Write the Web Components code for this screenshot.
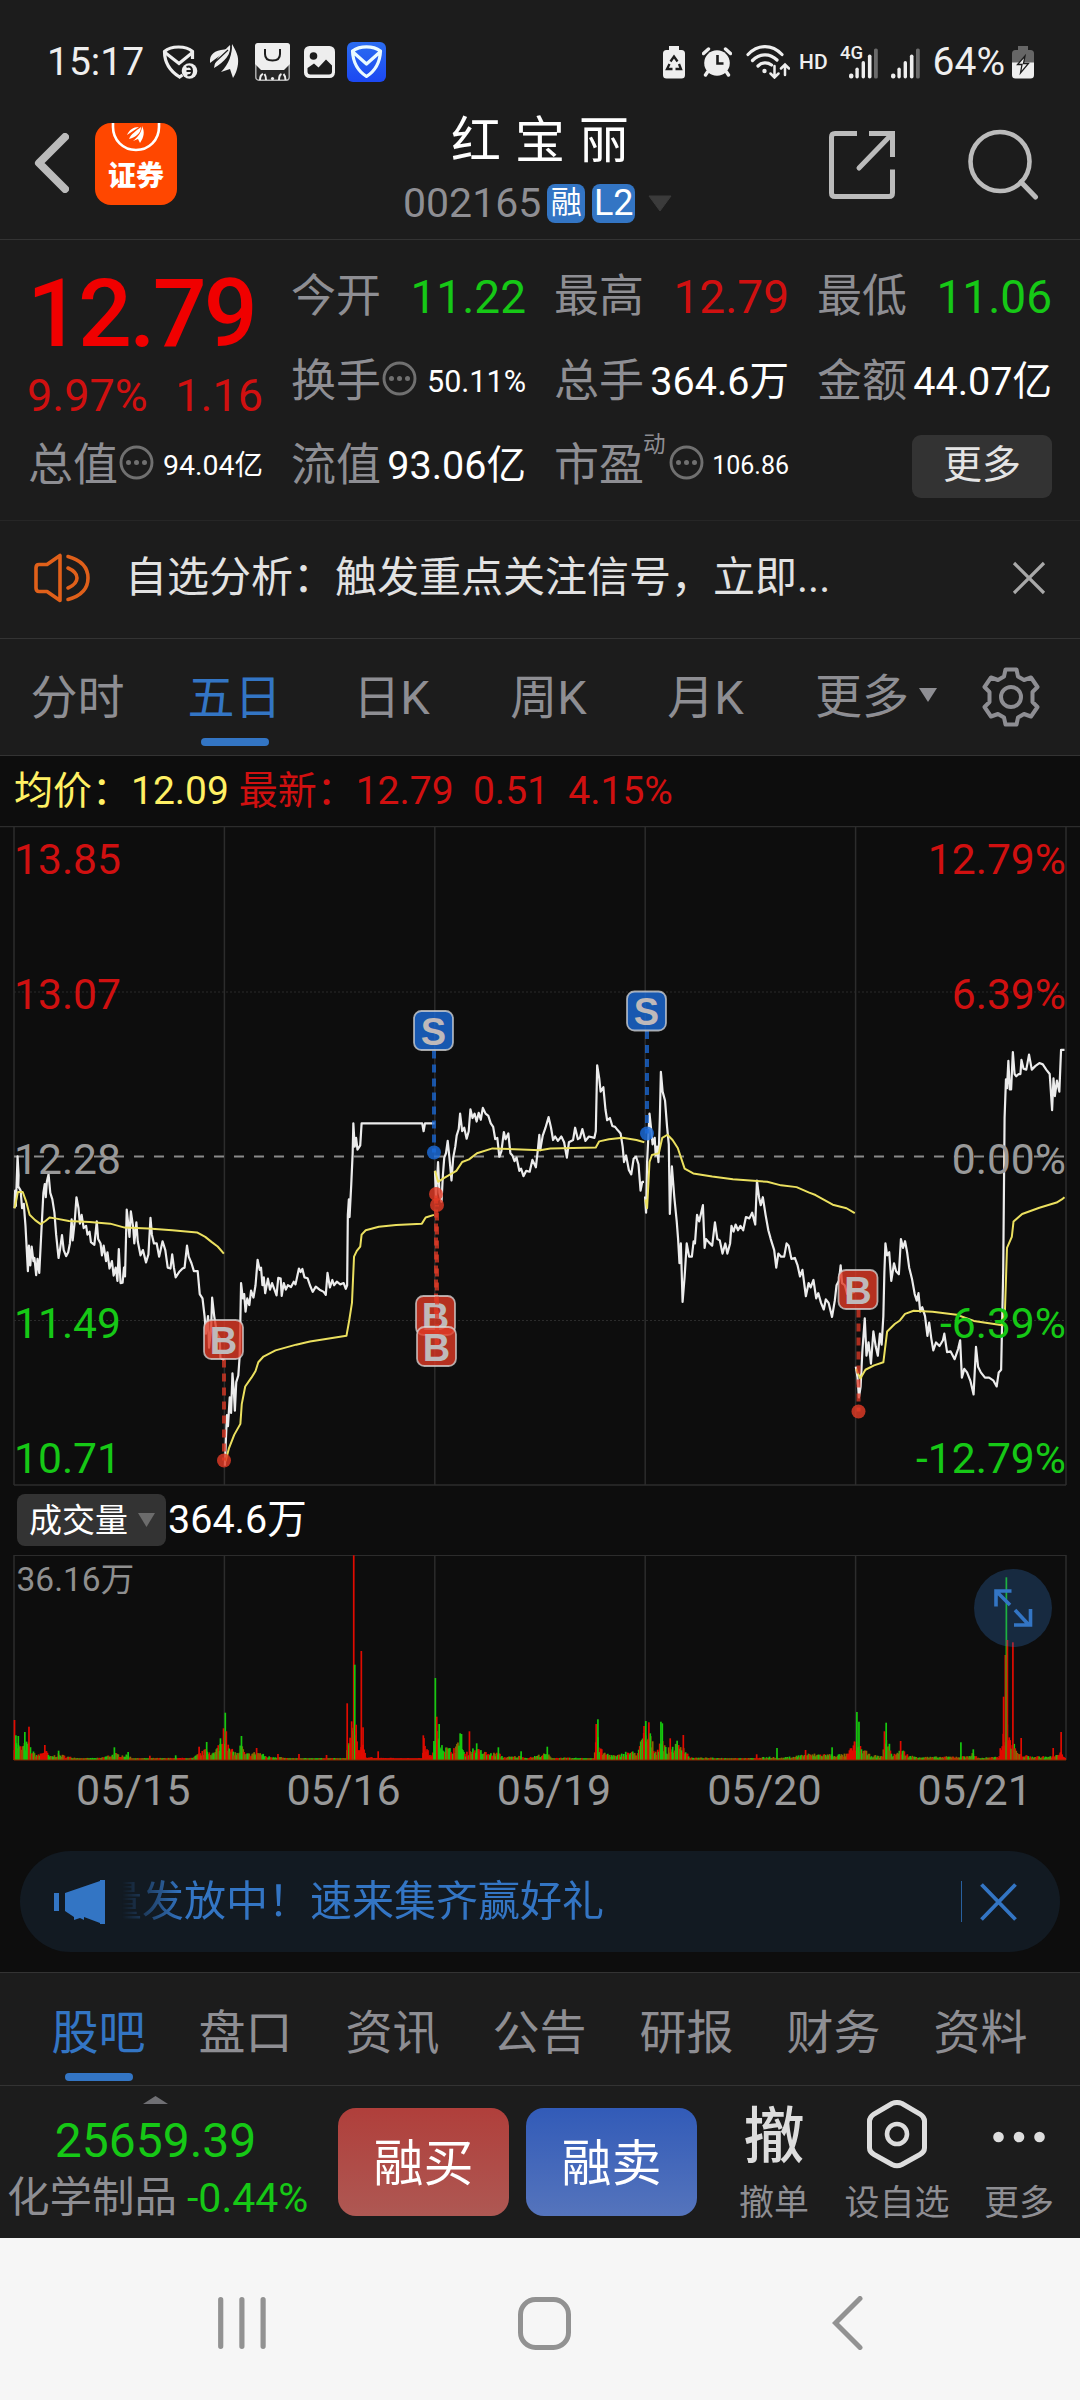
<!DOCTYPE html>
<html lang="zh-CN">
<head>
<meta charset="utf-8">
<title>红宝丽 002165</title>
<style>
  body {
    margin: 0;
    width: 1080px;
    height: 2400px;
    overflow: hidden;
    background: #0d0d0d;
    font-family: Roboto, "Noto Sans CJK SC", sans-serif;
    --panel: #1c1c1c;
    --line: #333;
    --grey: #8e8e93;
    --blue: #3375c4;
    --red: #d01010;
    --green: #16c816;
  }
</style>
</head>
<body>
<status-bar></status-bar>
<stock-header name="红 宝 丽" code="002165"></stock-header>
<quote-panel>
  <quote-cell label="今开" tone="down" size="46">11.22</quote-cell>
  <quote-cell label="最高" tone="up" size="46">12.79</quote-cell>
  <quote-cell label="最低" tone="down" size="46">11.06</quote-cell>
  <quote-cell label="换手" info size="30.5">50.11%</quote-cell>
  <quote-cell label="总手" size="39.5">364.6万</quote-cell>
  <quote-cell label="金额" size="39.5">44.07亿</quote-cell>
  <quote-cell slot="last" label="总值" info size="28.5">94.04亿</quote-cell>
  <quote-cell slot="last" label="流值" size="39.5">93.06亿</quote-cell>
  <quote-cell slot="last" label="市盈" mark="动" info size="25">106.86</quote-cell>
</quote-panel>
<signal-notice>自选分析：触发重点关注信号，立即...</signal-notice>
<period-tabs></period-tabs>
<chart-legend></chart-legend>
<price-chart></price-chart>
<volume-head></volume-head>
<volume-chart></volume-chart>
<date-axis></date-axis>
<promo-banner>量发放中！速来集齐赢好礼</promo-banner>
<info-tabs></info-tabs>
<trade-bar></trade-bar>
<system-nav></system-nav>

<script>
class Base extends HTMLElement {
  constructor() {
    super();
    this.shadow = this.attachShadow({mode: 'open'});
  }

  connectedCallback() {
    this.shadow.innerHTML = `<style>:host, * { box-sizing: border-box; } svg { display: block; flex: none; }</style>` + this.render();
  }
}

class StatusBar extends Base {
  signal() {
    return `
      <rect x="0" y="26" width="4.4" height="5" rx="2"/>
      <rect x="6.4" y="20" width="3.4" height="11" rx="1.7"/>
      <rect x="12.6" y="13.5" width="3.4" height="17.5" rx="1.7"/>
      <rect x="18.9" y="7" width="3.6" height="24" rx="1.8"/>
      <rect x="25" y="1" width="3.8" height="30" rx="1.6" fill="#6b6b6b"/>`;
  }

  render() {
    return `
      <style>
        :host {
          display: flex;
          align-items: center;
          height: 110px;
          padding: 14px 46px 0 47px;
          background: var(--panel);
          color: #eee;
          font-size: 39px;
          line-height: 50px;
        }
        .left, .right { display: flex; align-items: center; }
        .right { margin-left: auto; }
        .hd { font-size: 21px; font-weight: 500; margin: 0 12px 0 9px; }
        .net { overflow: visible; }
      </style>
      <div class="left">
        <span>15:17</span>
        <svg width="36" height="36" viewBox="0 0 36 36" style="margin-left:18px" fill="none" stroke="#eee" stroke-width="3.2">
          <path d="M20.500 31 17.500 33C8 27 2.500 18 2.500 7.500 9 1.500 24 1.500 30.500 7.500V15"/>
          <path d="M3 8.500 17 19.500 30.500 8.500" />
          <circle cx="27.500" cy="27" r="7.800" fill="#eee" stroke="none"/>
          <path d="M24.500 23c4-1.500 5.500 1 5.500 4s-1.500 5-4.500 4M24.500 27h5" stroke="#1c1c1c" stroke-width="2"/>
        </svg>
        <svg width="29" height="36" viewBox="0 0 29 36" style="margin-left:12px" fill="#eee">
          <path d="M0 19C-1 9 6 6 18 5 13 10 6 14 0 19Z"/>
          <path d="M4 24C5 14 13 8 20 1 22 10 14 18 4 24Z"/>
          <path d="M11 28C19 20 22 11 22 0 26 7 29 12 28 20 27 27 25 31 23 34L20 25Z"/>
          <path d="M3 20 18 6M10 26C18 18 21 10 21 3" stroke="#1c1c1c" stroke-width="1.200" fill="none"/>
        </svg>
        <svg width="35" height="38" viewBox="0 0 35 38" style="margin-left:16px">
          <rect x=".8" y=".8" width="33.400" height="36.400" rx="3" fill="#262626" stroke="#b5b5b5" stroke-width="1.400"/>
          <path d="M3 0H32Q35 0 35 3V21L29 27H6L0 21V3Q0 0 3 0Z" fill="#eee"/>
          <path d="M10 6V11Q10 17.500 17.500 17.500T25 11V6" fill="none" stroke="#1c1c1c" stroke-width="2"/>
          <path d="M5 37Q5 32 8 31M11 37Q11 33 9.500 31M24 37Q24 32 26.500 31M30.500 37Q30.500 33 28.500 31" fill="none" stroke="#eee" stroke-width="2"/>
          <circle cx="17.500" cy="35.500" r="1.600" fill="#eee"/>
        </svg>
        <svg width="31" height="32" viewBox="0 0 31 32" style="margin-left:14px">
          <rect width="31" height="32" rx="5.500" fill="#eee"/>
          <circle cx="9.500" cy="10" r="3.800" fill="#1c1c1c"/>
          <path d="M3.500 25.500V22L10 17.500 14.500 21.500 22 13.500 28 19.500V25.500Q28 28.500 25 28.500H6.500Q3.500 28.500 3.500 25.500Z" fill="#1c1c1c"/>
        </svg>
        <svg width="39" height="40" viewBox="0 0 39 40" style="margin-left:12px">
          <defs><linearGradient id="b" x1="0" y1="0" x2="0" y2="1"><stop offset="0" stop-color="#2a6cf0"/><stop offset="1" stop-color="#1c48f2"/></linearGradient></defs>
          <rect width="39" height="40" rx="6" fill="url(#b)"/>
          <path d="M5.500 9C13 3.500 26 3.500 33.500 9 33 21 28 29 19.500 34.500 11 29 6 21 5.500 9Z M6 10 19.500 22 33 10" fill="none" stroke="#eafaff" stroke-width="3.200" stroke-linejoin="round"/>
        </svg>
      </div>
      <div class="right">
        <svg width="22" height="33" viewBox="0 0 22 33">
          <path d="M6 0H16V4H18.500Q22 4 22 7.500V29Q22 32.500 18.500 32.500H3.500Q0 32.500 0 29V7.500Q0 4 3.500 4H6Z" fill="#eee"/>
          <path d="M7.500 15.500 11 10.500 14.500 15.500M16 18 18 23H12.500M9.500 23H4L6.500 18" fill="none" stroke="#1c1c1c" stroke-width="2.300"/>
        </svg>
        <svg width="30" height="30" viewBox="0 0 30 30" style="margin-left:17px">
          <circle cx="15" cy="16" r="12.800" fill="#eee"/>
          <path d="M1.500 6.500 6.500 2M23.500 2 28.500 6.500M5.500 25 3.500 28M24.500 25 26.500 28" stroke="#eee" stroke-width="3.400" stroke-linecap="round"/>
          <path d="M15.500 8V16.500H21.500" fill="none" stroke="#1c1c1c" stroke-width="2.600"/>
        </svg>
        <svg width="44" height="34" viewBox="0 0 44 34" style="margin-left:14px" fill="none" stroke="#eee" stroke-width="3.200" stroke-linecap="round">
          <path d="M2 9.500C12 -1 26 -1 36 9.500M6.500 15.500C14 8 24 8 31 15M12 21C16 17 21.500 17 25.500 20"/>
          <circle cx="18.500" cy="26" r="2.200" fill="#eee" stroke="none"/>
          <path d="M28.500 21V32M24.500 28.500 28.500 32.500 32.500 28.500M39 30V20M35 23.500 39 19.500 43 23.500" stroke-width="2.500"/>
        </svg>
        <span class="hd">HD</span>
        <svg class="net" width="39" height="34" viewBox="0 0 39 34" fill="#eee">
          <text x="0" y="14" font-size="18.500" font-weight="500">4G</text>
          <g transform="translate(9 2.500)">${this.signal()}</g>
        </svg>
        <svg width="30" height="34" viewBox="0 0 30 34" style="margin-left:12px" fill="#eee"><g transform="translate(0 2.500)">${this.signal()}</g></svg>
        <span style="margin:0 7px 0 12px">64%</span>
        <svg width="22" height="33" viewBox="0 0 22 33">
          <path d="M6 0H16V4H18.500Q22 4 22 7.500V17H0V7.500Q0 4 3.500 4H6Z" fill="#666"/>
          <path d="M0 16.500H22V29Q22 32.500 18.500 32.500H3.500Q0 32.500 0 29Z" fill="#eee"/>
          <path d="M13 10 5.500 18.500H10L8.500 27 16.500 17.500H11.500Z" fill="#eee" stroke="#1c1c1c" stroke-width="1.300"/>
        </svg>
      </div>`;
  }
}

class StockHeader extends Base {
  render() {
    return `
      <style>
        :host {
          display: grid;
          grid-template-columns: 403px 270px 1fr;
          height: 130px;
          background: var(--panel);
          border-bottom: 1px solid var(--line);
        }
        .left { display: flex; padding: 13px 0 0 34px; }
        .logo {
          display: flex;
          flex-direction: column;
          align-items: center;
          width: 82px;
          height: 82px;
          margin-left: 26px;
          border-radius: 16px;
          background: #ff4700;
          color: #fff;
          overflow: hidden;
          font: 900 28px/32px "Noto Sans CJK SC", sans-serif;
        }
        .logo svg { margin-bottom: 5px; }
        .mid { display: flex; flex-direction: column; align-items: center; }
        h1 { margin: 1px 0 0 4px; color: #fff; font-size: 50px; font-weight: 400; line-height: 60px; word-spacing: 1.500px; white-space: pre; }
        .code { display: flex; align-items: center; align-self: stretch; margin-top: 8px; color: var(--grey); font-size: 41px; line-height: 48px; }
        .tag {
          height: 39px;
          width: 38px;
          margin-left: 6px;
          border-radius: 8px;
          background: var(--blue);
          color: #fff;
          text-align: center;
          font-size: 31px;
          line-height: 38px;
        }
        .tag.l2 { width: 43px; font-size: 36px; line-height: 39px; margin-left: 7px; }
        .right { display: flex; padding: 19px 41px 0 0; justify-content: flex-end; }
      </style>
      <div class="left">
        <svg width="35" height="60" viewBox="0 0 35 60" style="margin-top:10px"><path d="M31 4 5 30 31 56" fill="none" stroke="#bbb" stroke-width="8" stroke-linecap="round" stroke-linejoin="round"/></svg>
        <div class="logo">
          <svg width="50" height="30" viewBox="0 0 50 30">
            <path d="M2 -2V4C2 17 12 27 25 27S48 17 48 4V-2" fill="none" stroke="#fff" stroke-width="2.600"/>
            <path d="M16 12C18 7 22 4 28 4L16 12ZM18 16C20 11 25 8 30 4 30 10 25 14 18 16ZM22 18C27 14 31 9 31 3 34 9 33 14 29 20L27 16Z" fill="#fff"/>
          </svg>
          <span>证券</span>
        </div>
      </div>
      <div class="mid">
        <h1>${this.getAttribute('name')}</h1>
        <div class="code">
          <span>${this.getAttribute('code')}</span>
          <span class="tag">融</span><span class="tag l2">L2</span>
          <svg width="24" height="17" viewBox="0 0 24 17" style="margin-left:13px"><path d="M1 1H23L12 16Z" fill="#3b3b3b" stroke="#3b3b3b" stroke-linejoin="round"/></svg>
        </div>
      </div>
      <div class="right">
        <svg width="67" height="68" viewBox="0 0 67 68" style="margin:2px 72px 0 0" fill="none" stroke="#bbb" stroke-width="5">
          <path d="M28 2.500H6Q2.500 2.500 2.500 6V62Q2.500 65.500 6 65.500H60Q63.500 65.500 63.500 62V38.500M40 2.500H63.500V26"/><path d="M62 4 30 37" stroke-linecap="round"/>
        </svg>
        <svg width="71" height="72" viewBox="0 0 71 72" fill="none" stroke="#bbb" stroke-width="4.600">
          <circle cx="32" cy="32.500" r="29.500"/><path d="M53 53 67.500 68" stroke-width="5" stroke-linecap="round"/>
        </svg>
      </div>`;
  }
}

class QuotePanel extends Base {
  render() {
    return `
      <style>
        :host {
          display: grid;
          grid-template-columns: repeat(4, 236px);
          grid-template-rows: 85px 84px 84px;
          column-gap: 27px;
          height: 281px;
          padding: 15px 28px 0 27px;
          background: var(--panel);
          border-bottom: 1px solid #262626;
        }
        .price { grid-row: 1 / 3; color: #f00000; }
        .now { padding-top: 13px; font-size: 95px; font-weight: 500; line-height: 92px; letter-spacing: -2.900px; white-space: nowrap; }
        .chg { display: flex; justify-content: space-between; margin-top: 10px; color: var(--red); font-size: 45px; line-height: 52px; }
        .wrap { align-self: center; height: 63px; width: 140px; justify-self: end; border-radius: 9px; background: #333; color: #e4e4e4; font-size: 39px; line-height: 60px; text-align: center; }
      </style>
      <div class="price">
        <div class="now">12.79</div>
        <div class="chg"><span>9.97%</span><span>1.16</span></div>
      </div>
      <slot></slot>
      <slot name="last"></slot>
      <div class="wrap">更多</div>`;
  }
}

class QuoteCell extends Base {
  render() {
    const tones = {up: 'var(--red)', down: 'var(--green)'};
    const color = tones[this.getAttribute('tone')] || '#fff';
    const mark = this.getAttribute('mark');
    return `
      <style>
        :host { display: flex; align-items: center; height: 84px; line-height: 60px; white-space: nowrap; }
        .label { color: var(--grey); font-size: 45px; margin-left: 1px; }
        .mark { align-self: flex-start; color: var(--grey); font-size: 22.500px; line-height: 28px; margin: 6px -19px 0 -1px; }
        svg { margin: -8px 0 0 1px; }
        .mark + svg { margin-left: 22px; }
        .value { margin-left: auto; color: ${color}; font-size: ${this.getAttribute('size')}px; }
      </style>
      <span class="label">${this.getAttribute('label')}</span>
      ${mark ? `<span class="mark">${mark}</span>` : ''}
      ${this.hasAttribute('info') ? `<svg width="35" height="35" viewBox="0 0 35 35" fill="#707070"><circle cx="17.500" cy="17.500" r="15.500" fill="none" stroke="#707070" stroke-width="2.900"/><circle cx="9.500" cy="17.500" r="2.500"/><circle cx="17.500" cy="17.500" r="2.500"/><circle cx="25.500" cy="17.500" r="2.500"/></svg>` : ''}
      <span class="value"><slot></slot></span>`;
  }
}

class SignalNotice extends Base {
  render() {
    return `
      <style>
        :host { display: flex; align-items: center; height: 118px; padding: 0 34px 3px 33px; background: var(--panel); border-bottom: 1px solid var(--line); color: #e2e2e2; font-size: 42px; line-height: 60px; }
        span { flex: 1; margin-left: 34px; }
      </style>
      <svg width="58" height="50" viewBox="0 0 58 50" fill="none" stroke="#e0601a" stroke-width="3.600" stroke-linejoin="round" stroke-linecap="round">
        <path d="M27 2.500V47.500L14 38.500H6Q3 38.500 3 35V15Q3 11.500 6 11.500H14Z"/><path d="M35 15Q44 19 44 25T35 35M35 3.500Q55 9 55 25T35 46.500"/>
      </svg>
      <span><slot></slot></span>
      <svg width="34" height="34" viewBox="0 0 34 34"><path d="M2 2 32 32M32 2 2 32" stroke="#a8a8a8" stroke-width="3.200"/></svg>`;
  }
}

class PeriodTabs extends Base {
  render() {
    const tabs = ['分时', '五日', '日K', '周K', '月K'];
    return `
      <style>
        :host { display: flex; height: 117px; padding-right: 1px; background: var(--panel); border-bottom: 1px solid var(--line); color: var(--grey); font-size: 47px; line-height: 118px; }
        .tab { display: flex; flex-direction: column; align-items: center; width: 157px; height: 116px; position: relative; left: -1px; }
        .tab.on { color: var(--blue); }
        .tab.on::after { content: ""; width: 68px; height: 8px; margin-top: -19px; border-radius: 4px; background: var(--blue); flex: none; }
        .more { display: flex; align-items: center; width: 153px; margin-left: 30px; }
        .gear { margin: 28px 0 0 14px; }
      </style>
      ${tabs.map(t => `<div class="tab${t === '五日' ? ' on' : ''}">${t}</div>`).join('')}
      <div class="more">更多<svg width="18" height="14" viewBox="0 0 18 14" style="margin:-4px 0 0 10px"><path d="M0 0H18L9 14Z" fill="#8e8e93"/></svg></div>
      <svg class="gear" width="58" height="60" viewBox="0 0 58 60" fill="none" stroke="#8e8e93" stroke-width="4" stroke-linejoin="round">
        <path d="M23.500 2.500H34.500L36 9.500 42 13 49 10.500 55.500 20 50.500 25V35L55.500 40 49 49.500 42 47 36 50.500 34.500 57.500H23.500L22 50.500 16 47 9 49.500 2.500 40 7.500 35V25L2.500 20 9 10.500 16 13 22 9.500Z"/>
        <circle cx="29" cy="30" r="10"/>
      </svg>`;
  }
}

class ChartLegend extends Base {
  render() {
    return `
      <style>
        :host { display: block; height: 70px; padding-left: 14px; font-size: 39px; line-height: 71px; color: var(--red); }
        div { white-space: pre; }
        b { font-weight: 400; color: #fff064; }
      </style>
      <div><b>均价：12.09 </b>最新：12.79  0.51  4.15%</div>`;
  }
}

const DAYS = [14, 224.4, 434.8, 645.2, 855.6, 1066];

// Each half of the plot is traced on a 1568-unit grid, scaled down to 540px.
const PRICE = {
  left: [
    '42,905 44,865 46,900 51,787 54,830 53,855 60,865 64,905 69,895 74,945 81,1048 84,990 88,1035 92,992 97,1025 100,1018 105,1057 109,1020 114,1052 120,960 126,870 130,850 133,880 136,845 141,828 146,870 152,885 158,915 163,965 170,1018 174,1000 180,966 185,1000 192,1014 198,1005 203,985 208,930 211,978 217,935 222,880 228,905 232,940 237,920 243,950 250,945 254,965 260,958 264,982 274,988 281,935 285,975 292,985 296,1012 301,990 308,1025 312,1005 318,1042 325,1025 330,1058 336,1040 341,1070 345,998 350,1075 356,1074 360,1040 363,1060 368,908 371,930 376,970 380,912 387,950 390,985 396,937 400,980 408,1012 415,1000 424,1028 431,1010 437,927 441,965 447,985 455,985 462,1015 472,980 480,1000 487,1040 495,1042 500,1010 505,1040 510,1062 520,1050 530,1042 536,1040 543,990 548,1015 556,1030 563,1048 574,1048 580,1100 588,1110 594,1150 598,1190 604,1150 607,1222 613,1180 616,1108 622,1150 630,1190 638,1200 640,1245 651,1250',
    '653,1490 656,1430 659,1375 662,1400 667,1335 671,1370 675,1280 679,1320 682,1365 686,1300 692,1285 696,1240 700,1075 705,1110 709,1100 713,1140 718,1110 724,1125 729,1092 736,1108 742,1080 748,1022 754,1045 758,1040 762,1080 766,1062 770,1098 778,1065 784,1090 790,1075 797,1090 803,1103 808,1063 815,1065 818,1104 824,1075 830,1090 836,1080 845,1084 853,1072 858,1078 868,1042 873,1050 878,1043 884,1062 893,1064 900,1080 908,1095 917,1083 928,1090 940,1095 946,1102 951,1052 958,1085 965,1068 970,1080 978,1072 988,1078 998,1075 1004,1088 1008,1080 1010,920 1013,885 1015,925 1020,850 1024,780 1026,712 1030,765 1034,745 1038,772 1046,762 1050,712 1226,712 1230,730 1234,712 1262,712',
    '1263,820 1266,880 1272,800 1276,870 1282,890 1286,830 1290,790 1295,780 1300,752 1305,790 1311,842 1316,790 1322,765 1326,740 1332,725 1336,690 1342,730 1348,722 1355,747 1361,730 1366,680 1372,700 1378,690 1384,708 1390,688 1396,704 1402,677 1410,690 1418,695 1425,712 1432,720 1438,748 1444,745 1450,788 1456,775 1463,732 1468,748 1476,735 1482,780 1488,785 1494,798 1500,790 1508,820 1513,815 1520,832 1528,820 1538,822 1546,795 1556,812 1562,770 1566,738 1569,775'
  ],
  right: [
    '0,775 8,740 16,722 25,698 32,722 38,750 44,742 52,752 62,742 70,755 78,790 84,755 96,750 102,722 110,748 116,745 123,725 132,752 142,742 158,745 162,730 166,580 172,610 176,640 184,630 190,680 195,705 203,700 210,718 218,720 226,728 234,735 240,765 244,800 250,785 258,818 265,828 272,792 279,788 286,805 290,845 292,865 297,845 302,845',
    '305,878 308,915 311,800 318,690 322,720 327,760 333,745 336,785 340,765 344,800 348,700 351,595 356,640 363,660 369,720 374,760 377,918 383,810 390,880 397,935 401,975 405,1030 409,985 414,1118 420,1060 426,985 433,1015 441,1015 446,980 450,985 456,920 462,935 468,915 473,898 478,995 482,975 490,982 500,990 508,937 515,975 522,978 530,1008 538,985 544,1008 552,985 556,945 562,958 568,942 575,955 582,945 590,955 598,925 608,928 616,915 625,942 630,842 636,880 641,898 647,880 655,920 663,955 670,975 680,1000 686,1040 692,1008 700,1015 709,1015 716,985 722,990 730,1020 740,1018 748,1035 755,1060 762,1045 772,1105 780,1075 786,1085 794,1068 802,1110 808,1098 816,1120 824,1135 830,1112 838,1120 848,1152 856,1115 861,1080 868,1070 873,1035 877,1075 885,1080 892,1100 914,1095',
    '917,1265 922,1290 926,1335 931,1310 936,1230 943,1155 948,1240 954,1210 961,1258 968,1185 975,1220 981,1240 987,1190 992,1215 997,1150 1000,1050 1003,985 1008,1012 1014,1005 1020,1070 1028,1030 1034,1048 1042,1055 1048,975 1054,995 1060,980 1066,1005 1072,1040 1080,1065 1088,1100 1094,1115 1099,1098 1104,1140 1110,1130 1118,1150 1125,1195 1130,1165 1136,1200 1142,1228 1150,1210 1160,1218 1170,1205 1174,1190 1182,1232 1192,1230 1204,1248 1214,1225 1220,1205 1225,1290 1232,1270 1240,1278 1250,1298 1259,1328 1266,1220 1272,1265 1280,1278 1292,1290 1304,1290 1316,1296 1326,1310 1332,1278 1339,1272 1345,1050 1349,700 1353,612 1356,632 1360,570 1364,635 1368,635 1373,550 1378,600 1383,605 1390,600 1395,600 1398,568 1404,588 1412,590 1420,556 1428,590 1438,582 1450,575 1460,578 1470,590 1480,600 1487,682 1491,610 1495,650 1501,615 1508,640 1513,545 1523,545'
  ]
};

const AVERAGE = {
  left: [
    '42,905 52,868 66,868 76,890 86,920 102,932 118,941 132,934 144,926 160,928 200,934 260,936 320,940 362,949 430,951 500,955 572,960 596,970 615,982 632,992 650,1008',
    '655,1480 665,1450 680,1420 698,1395 702,1350 712,1310 730,1290 742,1275 750,1255 765,1242 800,1228 860,1215 900,1208 1006,1195 1014,1160 1022,1120 1028,1015 1036,1002 1046,992 1050,965 1062,955 1100,947 1150,943 1225,940 1236,926 1260,920',
    '1263,820 1272,845 1290,836 1325,820 1342,800 1362,794 1385,780 1430,769 1569,773'
  ],
  right: [
    '0,773 30,769 162,767 172,753 200,748 240,745 280,750 303,755',
    '306,885 311,905 318,800 325,784 345,780 355,745 370,738 385,750 400,768 420,815 445,826 500,833 560,839 660,845 700,853 745,857 780,869 800,875 850,897 890,905 914,916',
    '918,1270 930,1292 945,1272 970,1262 997,1255 1008,1185 1030,1168 1045,1160 1060,1145 1085,1138 1140,1140 1210,1147 1260,1161 1343,1171 1350,1140 1356,995 1370,970 1375,935 1400,918 1450,904 1500,892 1515,885 1523,880'
  ]
};

class PriceChart extends Base {
  lines(set, cls) {
    const half = (list, x) => `<g transform="translate(${x} -16) scale(.34439 .44005)">${list.map(p => `<polyline class="${cls}" points="${p}"/>`).join('')}</g>`;
    return half(set.left, 0) + half(set.right, 540);
  }

  marker(kind, x, y, lineX, dotY) {
    const buy = kind === 'B';
    const fill = buy ? '#e03a26' : '#1b6bda';
    return `
      <path d="M${lineX} ${dotY < y ? y : y + 20}V${dotY}" stroke="${fill}" stroke-width="4" stroke-dasharray="8 6" opacity=".75"/>
      <circle cx="${lineX}" cy="${dotY}" r="7" fill="${fill}" opacity=".82"/>
      <rect x="${x - 19.5}" y="${y - 19.5}" width="39" height="39" rx="7.500" fill="${fill}" fill-opacity=".8" stroke="#d8d8d8" stroke-opacity=".75" stroke-width="1.800"/>
      <text class="mk" x="${x}" y="${y + 14}">${kind}</text>`;
  }

  render() {
    const rows = [
      ['13.85', '12.79%', 47.5, '#d01010'],
      ['13.07', '6.39%', 183, '#d01010'],
      ['12.28', '0.00%', 347.5, '#999'],
      ['11.49', '-6.39%', 512, '#16c816'],
      ['10.71', '-12.79%', 647, '#16c816']
    ];
    return `
      <style>
        :host { display: block; height: 660px; }
        polyline { fill: none; vector-effect: non-scaling-stroke; stroke-linejoin: round; }
        .p { stroke: #ececec; stroke-width: 2.200px; }
        .a { stroke: #ebe05f; stroke-width: 2px; }
        .ax { font-size: 42.600px; }
        .mk { font: 700 38px "Liberation Sans", sans-serif; fill: #bfb9ba; text-anchor: middle; }
      </style>
      <svg width="1080" height="660" viewBox="0 0 1080 660">
        <path d="M0 .5H1080M14 659H1066" stroke="#2c2c2c" stroke-width="1.500"/>
        ${DAYS.map(x => `<path d="M${x} 0V659" stroke="#2c2c2c" stroke-width="1.500"/>`).join('')}
        <path d="M14 166H1066M14 494.500H1066" stroke="#2b2b2b" stroke-dasharray="2 2"/>
        <path d="M14 330.500H1066" stroke="#8a8a8a" stroke-width="1.800" stroke-dasharray="10 10"/>
        ${this.lines(PRICE, 'p')}
        ${this.lines(AVERAGE, 'a')}
        ${this.marker('S', 433.5, 204.5, 434, 326.5)}
        ${this.marker('S', 646.5, 185, 647, 307.5)}
        ${this.marker('B', 223.5, 513.5, 224, 634.5)}
        ${this.marker('B', 435.5, 489.500, 436, 368)}
        ${this.marker('B', 436.5, 520.500, 437, 379)}
        ${this.marker('B', 858, 463.500, 858.5, 585.5)}
        ${rows.map(([price, rate, y, c]) => `
          <text class="ax" x="14" y="${y}" fill="${c}">${price}</text>
          <text class="ax" x="1066" y="${y}" fill="${c}" text-anchor="end">${rate}</text>`).join('')}
      </svg>`;
  }
}

class VolumeHead extends Base {
  render() {
    return `
      <style>
        :host { display: flex; height: 69px; padding: 8px 0 0 17px; color: #fff; font-size: 39.500px; line-height: 51px; }
        .pick { display: flex; align-items: center; width: 149px; height: 52px; padding-left: 12px; border-radius: 8px; background: #333; font-size: 33px; }
        .total { margin-left: 2px; }
      </style>
      <div class="pick">成交量<svg width="18" height="15" viewBox="0 0 18 15" style="margin-left:10px"><path d="M0 0H17L8.500 14Z" fill="#6c6c6c"/></svg></div>
      <span class="total">364.6万</span>`;
  }
}

// Typical bar height along the time axis, same 1568-per-half grid.
const VOL_BASE = [
  [42, 66], [60, 45], [80, 60], [95, 28], [110, 16], [130, 36], [145, 12], [170, 20], [200, 11], [240, 6], [290, 7], [310, 14], [335, 22], [350, 18], [372, 16], [385, 6], [560, 7], [575, 20], [600, 36], [622, 24], [636, 55], [655, 80], [665, 40], [690, 22], [700, 55], [712, 20], [750, 28], [775, 12], [810, 12], [830, 6], [1005, 6], [1010, 60], [1020, 95], [1034, 100], [1044, 30], [1056, 60], [1062, 14], [1090, 7], [1226, 6], [1230, 70], [1244, 26], [1256, 14], [1264, 110], [1275, 90], [1288, 46], [1310, 36], [1336, 60], [1350, 20], [1370, 38], [1390, 34], [1420, 22], [1447, 24], [1460, 10], [1490, 12], [1515, 14], [1530, 6], [1568, 18],
  [1590, 22], [1600, 8], [1725, 6], [1731, 90], [1740, 50], [1750, 26], [1790, 14], [1820, 28], [1850, 26], [1870, 90], [1888, 80], [1905, 26], [1920, 80], [1935, 34], [1960, 50], [1980, 55], [1995, 24], [2005, 8], [2190, 6], [2240, 12], [2260, 6], [2300, 12], [2340, 20], [2400, 20], [2430, 18], [2460, 20], [2482, 60], [2500, 44], [2525, 18], [2560, 12], [2575, 80], [2590, 18], [2620, 34], [2640, 14], [2700, 10], [2770, 12], [2800, 12], [2825, 22], [2840, 8], [2900, 10], [2912, 90], [2926, 110], [2940, 60], [2960, 20], [2990, 12], [3060, 12], [3080, 26], [3095, 10]
];

const VOL_SPIKES = [
  [42, 120, 'r'], [46, 74, 'g'], [53, 72, 'g'], [72, 84, 'g'], [84, 100, 'r'], [130, 45, 'r'], [170, 28, 'g'], [332, 38, 'g'], [372, 24, 'g'], [435, 13, 'r'], [510, 14, 'g'], [578, 40, 'r'], [600, 54, 'g'], [640, 65, 'g'], [649, 95, 'r'], [654, 142, 'g'], [657, 86, 'r'], [701, 72, 'g'], [745, 36, 'r'], [807, 18, 'r'], [868, 18, 'r'], [948, 15, 'r'],
  [1008, 170, 'r'], [1021, 116, 'r'], [1027, 614, 'r'], [1030, 286, 'g'], [1034, 106, 'r'], [1049, 327, 'r'], [1054, 98, 'r'], [1098, 26, 'r'], [1229, 74, 'r'], [1264, 246, 'g'], [1268, 130, 'r'], [1275, 108, 'g'], [1336, 80, 'g'], [1340, 78, 'g'], [1363, 86, 'r'], [1384, 50, 'g'], [1447, 38, 'g'], [1513, 26, 'g'],
  [1589, 40, 'g'], [1731, 108, 'r'], [1736, 122, 'g'], [1870, 102, 'r'], [1875, 117, 'g'], [1884, 113, 'r'], [1888, 80, 'g'], [1919, 115, 'g'], [1923, 110, 'g'], [1946, 65, 'r'], [1966, 58, 'g'], [1984, 75, 'r'], [2197, 17, 'r'], [2256, 36, 'g'], [2339, 30, 'r'], [2416, 38, 'g'], [2488, 144, 'g'], [2494, 115, 'g'], [2568, 86, 'r'], [2573, 112, 'g'], [2615, 57, 'r'], [2790, 53, 'g'], [2826, 32, 'g'],
  [2914, 190, 'r'], [2919, 315, 'r'], [2922, 548, 'g'], [2925, 360, 'r'], [2941, 353, 'r'], [2965, 66, 'r'], [3058, 36, 'r'], [3081, 84, 'r']
];

// Stretches where only rising bars occur.
const VOL_RED = [[115, 140], [515, 540], [1036, 1258], [2460, 2485], [2900, 2920], [3074, 3095]];

class VolumeChart extends Base {
  bars() {
    const fill = {r: '#e00b00', g: '#16c80e', m: '#8a6800'};
    const bar = (x, h, c) => `<rect x="${(x * .34439 - .8).toFixed(2)}" y="${(205 - h / 3).toFixed(1)}" width="1.700" height="${(h / 3).toFixed(1)}" fill="${fill[c]}"/>`;
    let seed = 7;
    const rand = () => (seed = (seed * 16807) % 2147483647) / 2147483647;
    let out = '';
    let k = 0;
    for (let x = 42; x < 3094; x += 2.9) {
      while (VOL_BASE[k + 1][0] < x) k++;
      const [x0, h0] = VOL_BASE[k];
      const [x1, h1] = VOL_BASE[k + 1];
      const h = (h0 + (h1 - h0) * (x - x0) / (x1 - x0)) * (.45 + .55 * rand());
      const r = rand();
      const red = VOL_RED.some(([a, b]) => x > a && x < b);
      out += bar(x, Math.max(h, 5), red ? 'r' : r < .3 ? 'r' : r < .7 ? 'g' : 'm');
    }
    return out + VOL_SPIKES.map(s => bar(...s)).join('');
  }

  render() {
    return `
      <style>
        :host { display: block; position: relative; height: 207px; }
        .zoom { position: absolute; right: 28px; top: 14px; width: 78px; height: 78px; padding: 19px; border-radius: 50%; background: rgba(51, 117, 196, .28); }
      </style>
      <svg width="1080" height="207" viewBox="0 0 1080 207">
        <path d="M14 .5H1066" stroke="#2c2c2c"/>
        ${DAYS.map(x => `<path d="M${x} 0V205" stroke="#2c2c2c" stroke-width="1.500"/>`).join('')}
        ${this.bars()}
        <path d="M14 205H1066" stroke="#8a2a00" stroke-width="1"/>
        <text x="16.500" y="35.500" font-size="33.500" fill="#8f8f8f">36.16万</text>
      </svg>
      <div class="zoom">
        <svg width="40" height="40" viewBox="0 0 40 40" fill="none" stroke="#3375c4" stroke-width="3.600">
          <path d="M18.500 3H3V18.500M4 4 17 17M22 22 35 36M37.500 21V37H21"/>
        </svg>
      </div>`;
  }
}

class DateAxis extends Base {
  render() {
    return `
      <style>
        :host { display: grid; grid-template-columns: repeat(5, 210.400px); height: 89px; padding-left: 28px; color: #999; font-size: 43px; line-height: 57px; text-align: center; }
      </style>
      ${['05/15', '05/16', '05/19', '05/20', '05/21'].map(d => `<span>${d}</span>`).join('')}`;
  }
}

class PromoBanner extends Base {
  render() {
    return `
      <style>
        :host { display: flex; align-items: center; height: 101px; margin: 0 20px 20px; padding: 0 43px 0 34px; border-radius: 51px; background: #121a22; color: var(--blue); font-size: 42px; line-height: 60px; }
        .clip { flex: 1; margin-left: 17px; overflow: hidden; white-space: nowrap; -webkit-mask-image: linear-gradient(90deg, transparent, #000 60px); mask-image: linear-gradient(90deg, transparent, #000 60px); }
        .clip span { margin-left: -22px; }
        i { width: 1.500px; height: 41px; margin-right: 18px; background: #28609f; }
      </style>
      <svg width="51" height="44" viewBox="0 0 51 44" fill="#3375c4"><path d="M0 13H5V31H0ZM11 13 46 1V0H51V44H46V43L30 37V40L26 38 20 40V37L11 31Z"/></svg>
      <div class="clip"><span><slot></slot></span></div>
      <i></i>
      <svg width="37" height="38" viewBox="0 0 37 38"><path d="M1.500 1.500 35.500 36.500M35.500 1.500 1.500 36.500" stroke="#3375c4" stroke-width="3.800"/></svg>`;
  }
}

class InfoTabs extends Base {
  render() {
    const tabs = ['股吧', '盘口', '资讯', '公告', '研报', '财务', '资料'];
    return `
      <style>
        :host { display: flex; height: 114px; padding: 0 25px; background: var(--panel); border: solid var(--line); border-width: 1px 0; color: var(--grey); font-size: 47px; line-height: 120px; }
        div { display: flex; flex-direction: column; align-items: center; width: 147px; height: 112px; }
        .on { color: var(--blue); }
        .on::after { content: ""; width: 68px; height: 8px; margin-top: -20px; border-radius: 4px; background: var(--blue); flex: none; }
      </style>
      ${tabs.map((t, i) => `<div class="${i ? '' : 'on'}">${t}</div>`).join('')}`;
  }
}

class TradeBar extends Base {
  render() {
    return `
      <style>
        :host { display: flex; height: 152px; background: var(--panel); color: var(--grey); }
        :host > *, div { flex: none; }
        .index { display: flex; flex-direction: column; align-items: center; width: 311px; padding: 10px 0 0; }
        .num { color: var(--green); font-size: 48px; line-height: 56px; margin-top: 9px; }
        .sector { display: flex; align-items: center; align-self: stretch; padding-left: 7px; font-size: 42.500px; line-height: 56px; white-space: nowrap; margin-top: 1px; }
        .sector b { margin-left: 10px; color: var(--green); font-size: 41px; font-weight: 400; }
        .btn { width: 171px; height: 108px; margin-top: 22px; border-radius: 18px; color: #fff; font-size: 50px; line-height: 113px; text-align: center; }
        .buy { margin-left: 27px; background: linear-gradient(#b03f3b, #ae5853); }
        .sell { margin-left: 17px; background: linear-gradient(#325bb8, #5574bc); }
        .act { display: flex; flex-direction: column; align-items: center; font-size: 35px; line-height: 44px; white-space: nowrap; }
        .act > :first-child { height: 82px; margin-top: 14px; }
        .big { color: #ddd; font-size: 61px; font-weight: 500; line-height: 74px; }
      </style>
      <div class="index">
        <svg width="25" height="8" viewBox="0 0 25 8"><path d="M0 8 12.500 0 25 8Z" fill="#707074"/></svg>
        <span class="num">25659.39</span>
        <div class="sector">化学制品<b>-0.44%</b></div>
      </div>
      <div class="btn buy">融买</div>
      <div class="btn sell">融卖</div>
      <div class="act" style="width:154px"><span class="big">撤</span>撤单</div>
      <div class="act" style="width:92px">
        <svg width="60" height="82" viewBox="0 0 60 82" fill="none" stroke="#ddd" stroke-width="5"><path d="M25 3.500Q30 1.500 35 3.500L53 14Q57.500 17 57.500 21V48Q57.500 52 53 54.500L35 64.500Q30 67 25 64.500L7 54.500Q2.500 52 2.500 48V21Q2.500 17 7 14Z"/><circle cx="30" cy="34" r="10" stroke-width="4.600"/></svg>设自选
      </div>
      <div class="act" style="width:122px;margin-left:15px">
        <svg width="60" height="82" viewBox="0 0 60 82" fill="#ddd"><circle cx="9.500" cy="37" r="5.300"/><circle cx="30" cy="37" r="5.300"/><circle cx="50.500" cy="37" r="5.300"/></svg>更多
      </div>`;
  }
}

class SystemNav extends Base {
  render() {
    return `
      <style>
        :host { display: flex; align-items: center; height: 162px; padding: 8px 0 0 218px; background: #f6f6f6; }
      </style>
      <svg width="48" height="52" viewBox="0 0 48 52"><path d="M2.700 2.700V49.300M23.900 2.700V49.300M45.100 2.700V49.300" stroke="#929292" stroke-width="5.200" stroke-linecap="round"/></svg>
      <svg width="53" height="53" viewBox="0 0 53 53" style="margin-left:252px"><rect x="2.500" y="2.500" width="48" height="48" rx="15" fill="none" stroke="#929292" stroke-width="5"/></svg>
      <svg width="32" height="54" viewBox="0 0 32 54" style="margin-left:261px"><path d="M28 2.500 3.500 27 28 51.500" fill="none" stroke="#929292" stroke-width="5" stroke-linecap="round"/></svg>`;
  }
}

customElements.define('status-bar', StatusBar);
customElements.define('stock-header', StockHeader);
customElements.define('quote-panel', QuotePanel);
customElements.define('quote-cell', QuoteCell);
customElements.define('signal-notice', SignalNotice);
customElements.define('period-tabs', PeriodTabs);
customElements.define('chart-legend', ChartLegend);
customElements.define('price-chart', PriceChart);
customElements.define('volume-head', VolumeHead);
customElements.define('volume-chart', VolumeChart);
customElements.define('date-axis', DateAxis);
customElements.define('promo-banner', PromoBanner);
customElements.define('info-tabs', InfoTabs);
customElements.define('trade-bar', TradeBar);
customElements.define('system-nav', SystemNav);
</script>
</body>
</html>
